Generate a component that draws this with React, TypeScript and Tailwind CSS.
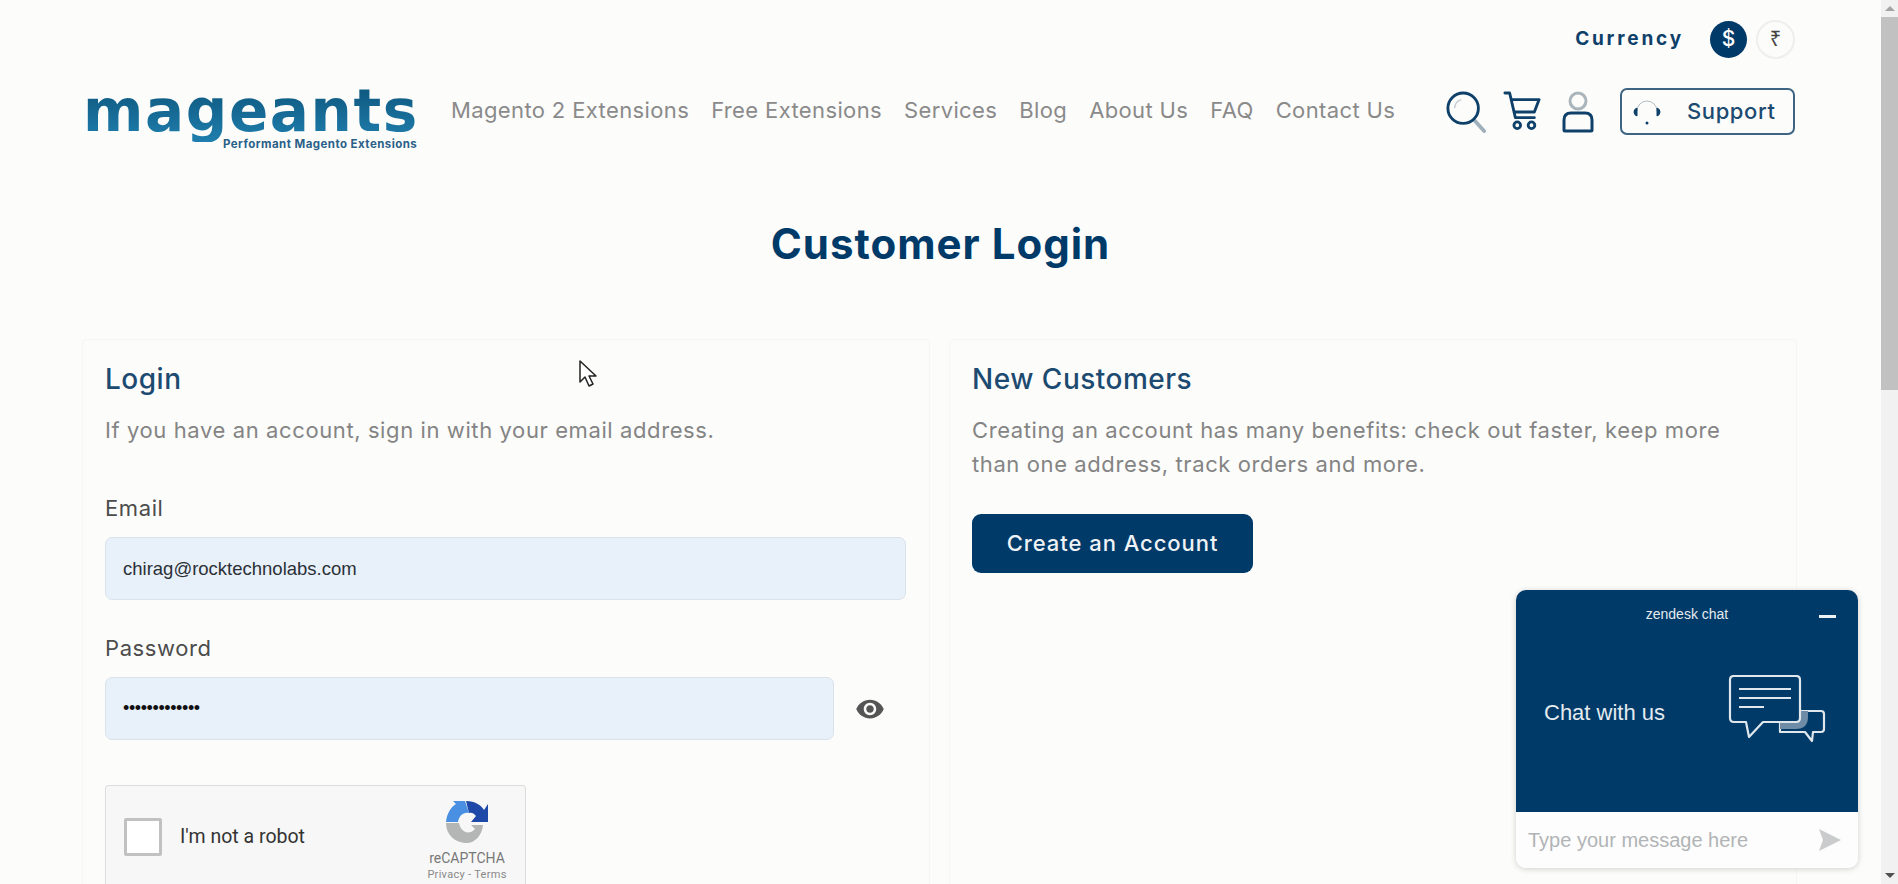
import { MdVisibility } from 'react-icons/md';

const navLinks = ['Magento 2 Extensions', 'Free Extensions', 'Services', 'Blog', 'About Us', 'FAQ', 'Contact Us'];

function SearchIcon() {
  return (
    <svg width="40" height="42" viewBox="0 0 42 44" fill="none">
      <path d="M30 31 L40 42" stroke="#9fb0bb" strokeWidth="4" strokeLinecap="round" />
      <circle cx="18" cy="18" r="16" stroke="#0e4069" strokeWidth="3" />
      <path d="M9 18 A10 10 0 0 1 16 9" stroke="#c5ced5" strokeWidth="1.5" />
    </svg>
  );
}

function CartIcon() {
  return (
    <svg width="38" height="40" viewBox="0 0 40 42" fill="none" stroke="#0e4069" strokeWidth="3" strokeLinejoin="round" strokeLinecap="round">
      <path d="M2 2 H7 L13 28 H33" />
      <path d="M9 9 H38 L33 22 H12" />
      <circle cx="15" cy="36" r="3.5" />
      <circle cx="30" cy="36" r="3.5" />
    </svg>
  );
}

function UserIcon() {
  return (
    <svg width="32" height="42" viewBox="0 0 32 42" fill="none" strokeWidth="3">
      <circle cx="16" cy="10" r="8" stroke="#a9b4bb" />
      <path d="M9 22 H23 Q30 22 30 29 V39 Q30 40 29 40 H3 Q2 40 2 39 V29 Q2 22 9 22 Z" stroke="#0e4069" strokeLinejoin="round" />
    </svg>
  );
}

function HeadsetIcon() {
  return (
    <svg width="28" height="28" viewBox="0 0 28 28" fill="none">
      <path d="M4 13 A10 10 0 0 1 24 13" stroke="#b4bcc2" strokeWidth="1" />
      <path d="M1 14 Q1 11 4 10 V18 Q1 17 1 14 Z" fill="#0e4069" stroke="#0e4069" strokeWidth="1" />
      <path d="M27 14 Q27 11 24 10 V18 Q27 17 27 14 Z" fill="#0e4069" stroke="#0e4069" strokeWidth="1" />
      <circle cx="14" cy="25" r="1.5" fill="#0e4069" />
    </svg>
  );
}

function ChatBubbles() {
  return (
    <svg width="100" height="76" viewBox="0 0 100 76" fill="none" stroke="#dfe7ec" strokeWidth="2.2" strokeLinejoin="round">
      <path d="M52 47 V57 H77 L84 66 L85 57 H93 Q96 57 96 54 V39 Q96 36 93 36 H72 V42 Q72 47 67 47 Z" />
      <path d="M72 36 H80 V42 Q80 54 68 54 H52 V47 H67 Q72 47 72 42 Z" fill="#6f8ca6" stroke="none" />
      <path d="M6 1 H68 Q72 1 72 5 V43 Q72 47 68 47 H35 L21 62 L18 47 H6 Q2 47 2 43 V5 Q2 1 6 1 Z" fill="#003a69" />
      <path d="M11 14 H63 M11 23 H63" strokeWidth="1.8" />
      <path d="M11 32 H36" strokeWidth="1.8" />
    </svg>
  );
}

function CaptchaLogo() {
  return (
    <svg width="44" height="44" viewBox="0 0 44 44" fill="none">
      <path d="M1 21 C2 12 6 6 11 3 L8 0 H20 L24 12 C18 11 14 15 13 21 Z" fill="#4a90e2" />
      <path d="M21 0 C30 0 36 4 39 9 L43 3 V21 H26 L31 15 C29 12 26 11 24 12 Z" fill="#1f49a8" />
      <path d="M1 22 H14 C15 28 20 33 26 31 C28 30 29 29 30 28 L26 24 H38 C37 35 29 43 20 42 C9 41 1 33 1 22 Z" fill="#b4b6b5" />
    </svg>
  );
}

function Cursor() {
  return (
    <svg width="20" height="30" viewBox="0 0 20 30" fill="#fff" stroke="#222" strokeWidth="1.5" strokeLinejoin="round">
      <path d="M2 2 V23 L7 18 L11 27 L15 25 L11 17 H18 Z" />
    </svg>
  );
}

export default function App() {
  return (
    <div className="flex h-[884px] overflow-hidden bg-[#fcfcfb] font-['Inter',sans-serif]">
      <div className="relative flex-1 min-w-0">
        <header className="pl-[85px] pr-[86px]">
          <div className="flex justify-end items-center pt-[20px] h-[58px]">
            <span className="text-[19px] font-bold tracking-[2.8px] text-[#0e4069] mr-[26px]">Currency</span>
            <span className="flex items-center justify-center w-[37px] h-[37px] rounded-full bg-[#003a69] text-white text-[21px] font-medium mr-[9px]">$</span>
            <span className="flex items-center justify-center w-[39px] h-[39px] rounded-full border-2 border-[#eeeeee] text-[#444] text-[20px] font-['Noto_Sans',sans-serif]">₹</span>
          </div>
          <div className="flex items-start mt-[26px] h-[76px]">
            <div className="w-[366px] shrink-0 flex flex-col items-start mt-[-4px] ml-[-2px] mr-[2px]">
              <span className="block text-[58px] leading-[62px] font-bold tracking-[1.6px] font-['DejaVu_Sans',sans-serif] bg-gradient-to-b from-[#0c5379] to-[#1f7fae] bg-clip-text text-transparent">mageants</span>
              <span className="text-[11.5px] leading-[12px] font-bold text-[#2a6088] mt-[-4px] ml-[140px] tracking-[0.45px] whitespace-nowrap">Performant Magento Extensions</span>
            </div>
            <nav className="flex gap-[22px] mt-[11px] text-[22px] leading-[30px] tracking-[0.37px] text-[#8a8a8a]">
              {navLinks.map((link) => (
                <a key={link} href="#" className="whitespace-nowrap">{link}</a>
              ))}
            </nav>
            <div className="ml-auto flex items-start">
              <div className="mt-[7px] mr-[17px]"><SearchIcon /></div>
              <div className="mt-[7px] mr-[21px]"><CartIcon /></div>
              <div className="mt-[7px] mr-[26px]"><UserIcon /></div>
              <button className="flex items-center w-[175px] h-[47px] mt-[4px] border-2 border-[#3d6482] rounded-[7px] pl-[11px] text-[22px] tracking-[0.6px] font-medium text-[#1c4a70]">
                <HeadsetIcon />
                <span className="ml-[26px]">Support</span>
              </button>
            </div>
          </div>
        </header>

        <h1 className="text-center mt-[54px] text-[42px] leading-[60px] tracking-[1px] font-bold text-[#003a69]">Customer Login</h1>

        <main className="grid grid-cols-2 gap-[19px] pl-[82px] pr-[84px] mt-[65px]">
          <section className="border border-[#f6f6f5] rounded-[4px] pl-[22px] pr-[23px] pt-[20px] h-[600px]">
            <h2 className="text-[28px] leading-[38px] tracking-[0.5px] font-medium text-[#1c4a70]">Login</h2>
            <p className="mt-[15px] text-[22px] leading-[34px] tracking-[0.6px] text-[#848484]">If you have an account, sign in with your email address.</p>
            <label className="block mt-[46px] text-[22px] leading-[30px] tracking-[0.6px] text-[#4c4c4c]">Email</label>
            <input readOnly value="chirag@rocktechnolabs.com" className="block mt-[14px] w-full h-[63px] px-[17px] rounded-[7px] border border-[#dbe3ea] bg-[#e8f0fa] text-[18.5px] text-[#2b3137] font-['Liberation_Sans',sans-serif] outline-none" />
            <label className="block mt-[33px] text-[22px] leading-[30px] tracking-[0.6px] text-[#4c4c4c]">Password</label>
            <div className="flex items-center mt-[14px]">
              <input readOnly type="password" value="chirag1234567" className="block w-[729px] h-[63px] px-[17px] rounded-[7px] border border-[#dbe3ea] bg-[#e8f0fa] text-[18px] tracking-[-0.4px] text-[#111] font-['Liberation_Sans',sans-serif] outline-none" />
              <MdVisibility className="ml-[21px] w-[30px] h-[30px] text-[#555]" />
            </div>
            <div className="flex items-start mt-[45px] w-[421px] h-[110px] border border-[#dddddd] rounded-[3px] bg-[#f7f7f7] pl-[18px] pt-[32px]">
              <span className="w-[38px] h-[38px] border-[3px] border-[#c1c1c1] rounded-[2px] bg-white" />
              <span className="ml-[18px] mt-[5px] text-[19.5px] leading-[28px] text-[#333] font-['Roboto',sans-serif]">I'm not a robot</span>
              <div className="ml-auto mr-[15px] mt-[-17px] flex flex-col items-center w-[86px] font-['Roboto',sans-serif]">
                <CaptchaLogo />
                <span className="mt-[5px] text-[14px] leading-[16px] text-[#777]">reCAPTCHA</span>
                <span className="mt-[2px] text-[11px] leading-[14px] tracking-[0.3px] text-[#888] whitespace-nowrap">Privacy - Terms</span>
              </div>
            </div>
          </section>

          <section className="border border-[#f6f6f5] rounded-[4px] pl-[22px] pr-[23px] pt-[20px] h-[600px]">
            <h2 className="text-[28px] leading-[38px] tracking-[0.5px] font-medium text-[#1c4a70]">New Customers</h2>
            <p className="mt-[15px] text-[22px] leading-[34px] tracking-[0.6px] text-[#848484]">Creating an account has many benefits: check out faster, keep more than one address, track orders and more.</p>
            <button className="block mt-[33px] w-[281px] h-[59px] rounded-[9px] bg-[#003a69] text-[22px] tracking-[0.95px] font-medium text-[#eef2f5]">Create an Account</button>
          </section>
        </main>

        <div className="absolute left-[578px] top-[359px]"><Cursor /></div>

        <div className="absolute left-[1516px] top-[590px] w-[342px] h-[278px] flex flex-col rounded-[10px] bg-white shadow-[0_1px_6px_rgba(0,0,0,0.18)] overflow-hidden font-['Liberation_Sans',sans-serif]">
          <div className="relative h-[222px] bg-[#003a69] text-[#e4ebef]">
            <div className="pt-[14px] text-center text-[14px] leading-[20px]">zendesk chat</div>
            <span className="absolute right-[22px] top-[25px] w-[17px] h-[3px] bg-[#eef2f5]" />
            <div className="flex items-center justify-between pl-[28px] pr-[30px] mt-[51px]">
              <span className="text-[22px] leading-[28px]">Chat with us</span>
              <ChatBubbles />
            </div>
          </div>
          <div className="flex flex-1 items-center justify-between pl-[12px] pr-[16px] bg-[#fdfdfd]">
            <span className="text-[20px] text-[#b1b4b6]">Type your message here</span>
            <svg width="24" height="24" viewBox="0 0 24 24" fill="#c9cbcc"><path d="M1 1 L23 12 L1 23 L5 12 Z" /></svg>
          </div>
        </div>
      </div>

      <div className="flex flex-col w-[17px] shrink-0 bg-[#f1f1f1] items-center">
        <div className="h-[17px] flex items-center justify-center">
          <span className="w-0 h-0 border-x-[5px] border-x-transparent border-b-[5px] border-b-[#a3a3a3]" />
        </div>
        <div className="w-full h-[373px] bg-[#c1c1c1]" />
        <div className="flex-1" />
        <div className="h-[17px] flex items-center justify-center">
          <span className="w-0 h-0 border-x-[5px] border-x-transparent border-t-[5px] border-t-[#505050]" />
        </div>
      </div>
    </div>
  );
}
